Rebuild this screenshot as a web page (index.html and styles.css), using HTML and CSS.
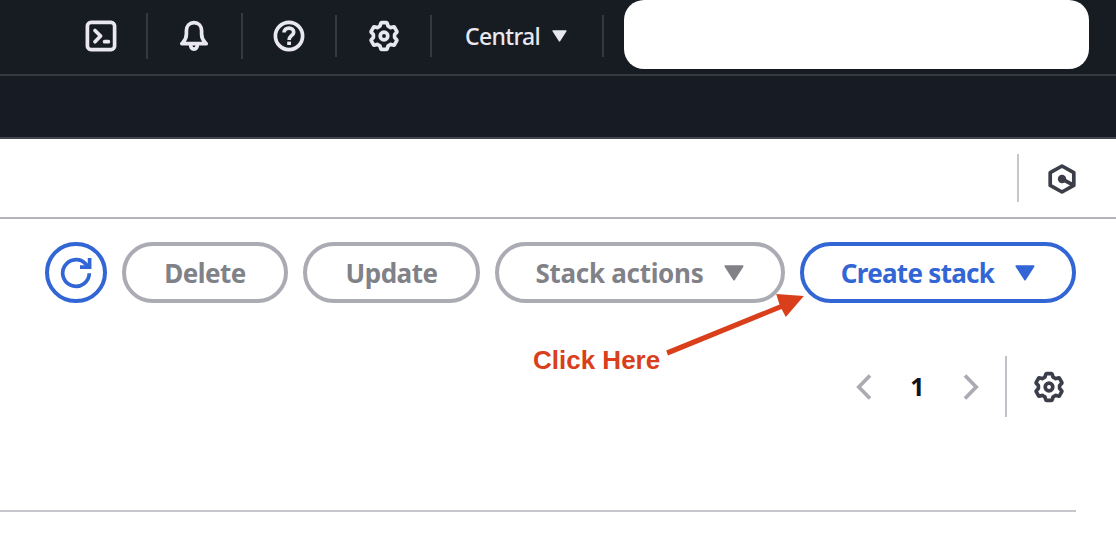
FILE: index.html
```html
<!DOCTYPE html>
<html lang="en">
<head>
<meta charset="utf-8">
<title>Stacks</title>
<link rel="stylesheet" href="styles.css">
</head>
<body>
<svg class="symbols" aria-hidden="true">
  <symbol id="gear" viewBox="-16 -16 32 32">
    <path d="M-4.2-9.8C-3.4-10.4-3.8-13.4-2.3-13.4H2.3C3.8-13.4 3.4-10.4 4.2-9.8L6.4-8.5C7.3-8.1 9.7-10 10.5-8.7L12.8-4.7C13.5-3.4 10.7-2.3 10.6-1.3V1.3C10.7 2.3 13.5 3.4 12.8 4.7L10.5 8.7C9.7 10 7.3 8.1 6.4 8.5L4.2 9.8C3.4 10.4 3.8 13.4 2.3 13.4H-2.3C-3.8 13.4-3.4 10.4-4.2 9.8L-6.4 8.5C-7.3 8.1-9.7 10-10.5 8.7L-12.8 4.7C-13.5 3.4-10.7 2.3-10.6 1.3V-1.3C-10.7-2.3-13.5-3.4-12.8-4.7L-10.5-8.7C-9.7-10-7.3-8.1-6.4-8.5Z"/>
    <circle r="3.8"/>
  </symbol>
  <symbol id="caret" viewBox="0 0 20 16">
    <path class="solid" d="M1.5 1.2H18.5L10 14.4Z"/>
  </symbol>
</svg>
<header class="topnav">
  <div class="cell cell-terminal tall">
    <svg class="icon" viewBox="-16 -16 32 32"><rect x="-13.6" y="-13.6" width="27.2" height="27.2" rx="3.6"/><path d="M-6-5.5-.4 0-6 5.7M3.6 5.7H7.4" stroke-linecap="round"/></svg>
  </div>
  <div class="cell cell-bell tall">
    <svg class="icon" viewBox="-16 -16 32 32"><path d="M-12.2 7.7H12.2C9.6 4.8 7.6 3.7 7.6-2V-5.2C7.6-10 4.6-13.3 0-13.3S-7.6-10-7.6-5.2V-2C-7.6 3.7-9.6 4.8-12.2 7.7ZM-3.4 8.2C-3.4 11.6-2 13.1 0 13.1S3.4 11.6 3.4 8.2"/></svg>
  </div>
  <div class="cell cell-help">
    <svg class="icon" viewBox="-16 -16 32 32"><circle r="13.6"/><path d="M-4.9-3.4C-4.9-6.4-2.7-7.9 0-7.9S4.7-6.3 4.7-3.8C4.7-.5.1-.5.1 4"/><path class="dot" d="M-1.8 5.6H2V9H-1.8Z"/></svg>
  </div>
  <div class="cell cell-settings">
    <svg class="icon"><use href="#gear"/></svg>
  </div>
  <div class="cell cell-region">
    <span class="region">Central</span>
    <svg class="caret caret-small"><use href="#caret"/></svg>
  </div>
  <div class="account"></div>
</header>
<div class="subnav"></div>
<div class="toolbar">
  <span class="toolbar-divider"></span>
  <svg class="hex" viewBox="-16 -16 32 32"><path d="M0-13 11.8-6.4V6.4L0 13-11.8 6.4V-6.4ZM0 0 11 5.8"/><circle class="dot" r="4.2"/></svg>
</div>
<main class="content">
  <div class="actions">
    <button class="btn refresh" aria-label="Refresh">
      <svg viewBox="-16 -16 32 32"><path d="M13.3.3A13.3 13.3 0 1 1 9.4-9.4L12.8-6"/><path d="M13.6-15V-5.8H4"/></svg>
    </button>
    <button class="btn delete">Delete</button>
    <button class="btn update">Update</button>
    <button class="btn stack">Stack actions<svg class="caret"><use href="#caret"/></svg></button>
    <button class="btn create">Create stack<svg class="caret"><use href="#caret"/></svg></button>
  </div>
  <div class="pager">
    <svg class="chevron" viewBox="0 0 16 26"><path d="M14 1.5 2.8 13 14 24.5"/></svg>
    <span class="page">1</span>
    <svg class="chevron" viewBox="0 0 16 26"><path d="M2 1.5 13.2 13 2 24.5"/></svg>
    <span class="pager-divider"></span>
    <svg class="icon"><use href="#gear"/></svg>
  </div>
  <hr class="rule">
  <div class="note">Click Here</div>
  <svg class="arrow" viewBox="0 0 142 64"><path d="M.2 57.4 113.5 11.6 110.2 1 137.9 3 119.8 24 115.6 16.1 2 62.5Z"/></svg>
</main>
</body>
</html>
```
FILE: styles.css
```css
* { box-sizing: border-box; }

body {
  margin: 0;
  width: 1116px;
  height: 546px;
  overflow: hidden;
  background: #fff;
  font-family: "Noto Sans", "Open Sans", sans-serif;
}

svg {
  flex: none;
  fill: none;
  stroke: currentColor;
  stroke-width: 3.7;
  stroke-linejoin: round;
}

.symbols { display: none; }
.icon { width: 32px; height: 32px; }
.solid { fill: currentColor; stroke-width: 2; }
.dot { fill: currentColor; stroke: none; }

.topnav {
  display: flex;
  height: 76px;
  border-bottom: 2px solid #343841;
  background: #171c23;
  color: #e9e8ee;
}

.cell {
  display: flex;
  align-items: center;
  height: 42px;
  margin-top: 15px;
  border-right: 2px solid #343841;
}

.tall { height: 46px; margin-top: 13px; }
.cell-terminal { width: 148px; padding-left: 85px; }
.cell-bell { width: 95px; padding-left: 30px; }
.cell-help { width: 94px; padding-left: 30px; }
.cell-settings { width: 95px; padding-left: 31px; }
.cell-region { width: 172px; padding-left: 33px; }

.region {
  width: 87px;
  padding-bottom: 1px;
  font-size: 23px;
  font-weight: 500;
  letter-spacing: -.65px;
  white-space: nowrap;
}

.caret { width: 20px; height: 16px; }
.caret-small { width: 15px; height: 12px; }

.account {
  width: 465px;
  height: 69px;
  margin-left: 20px;
  border-radius: 20px;
  background: #fff;
}

.subnav {
  height: 63px;
  border-bottom: 2px solid #424650;
  background: #171b23;
}

.toolbar {
  display: flex;
  justify-content: flex-end;
  height: 80px;
  padding: 15px 38px 0 0;
  border-bottom: 2px solid #b4b4bb;
  color: #3b3e48;
}

.toolbar-divider { width: 2px; height: 48px; margin-right: 27px; background: #c6c6cd; }
.hex { width: 32px; height: 32px; margin-top: 9px; }

.content { position: relative; }

.actions {
  display: flex;
  gap: 15px;
  padding: 23px 0 0 45px;
}

.btn {
  display: flex;
  align-items: center;
  justify-content: center;
  flex: none;
  height: 61px;
  padding: 0;
  border: 4px solid #ababb3;
  border-radius: 31px;
  background: #fff;
  color: #818188;
  font: 700 26px "Noto Sans", sans-serif;
  letter-spacing: -.5px;
  white-space: nowrap;
}

.refresh { width: 62px; border-color: #3266d5; color: #3266d5; }
.refresh svg { width: 32px; height: 32px; stroke-linejoin: miter; }
.delete { width: 166px; }
.update { width: 177px; }
.stack { width: 290px; gap: 21px; letter-spacing: -.3px; }
.create { width: 276px; gap: 21px; border-color: #3266d5; color: #3266d5; letter-spacing: -.7px; }

.pager {
  display: flex;
  align-items: center;
  height: 61px;
  margin-top: 53px;
  padding-left: 856px;
  color: #3b3e48;
}

.chevron { width: 16px; height: 26px; color: #ababb3; stroke-linejoin: miter; }
.page {
  width: 91px;
  padding-bottom: 2px;
  color: #0f141a;
  font-size: 25px;
  font-weight: 700;
  text-align: center;
}
.pager-divider { width: 2px; height: 61px; margin: 0 26px; background: #c1c1c9; }

.rule {
  width: 1076px;
  height: 2px;
  margin: 93px 0 0;
  border: 0;
  background: #c6c6cd;
}

.note {
  position: absolute;
  left: 533px;
  top: 126px;
  color: #da3f1b;
  font: 700 26px/30px "Liberation Sans", Arial, sans-serif;
  white-space: nowrap;
}

.arrow {
  position: absolute;
  left: 666px;
  top: 74px;
  width: 142px;
  height: 64px;
  fill: #da3f1b;
  stroke: none;
}
```
